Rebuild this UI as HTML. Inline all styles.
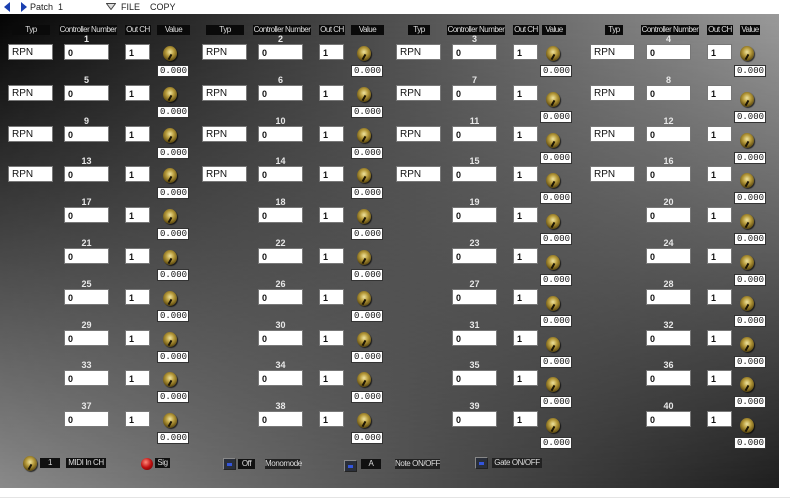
<!DOCTYPE html>
<html><head><meta charset="utf-8"><style>
*{margin:0;padding:0;box-sizing:border-box}
body{width:790px;height:500px;background:#fff;position:relative;overflow:hidden;font-family:"Liberation Sans",sans-serif}
#top{position:absolute;left:0;top:0;width:790px;height:14px;background:#fff;font-size:9px;color:#222}
#top span{position:absolute;top:2px}
#panel{position:absolute;left:0;top:14px;width:779px;height:474px;background:linear-gradient(to right,#050505,#9a9a9a)}
#ov{position:absolute;left:0;top:0;width:779px;height:474px;background:linear-gradient(to right,#8a8a8a,#1e1e1e);-webkit-mask-image:linear-gradient(to bottom,transparent,#000);mask-image:linear-gradient(to bottom,transparent,#000)}
.h{position:absolute;background:#0a0a0a;color:#ddd;font-size:8px;height:10px;line-height:10px;text-align:center;letter-spacing:-0.5px;top:11px;white-space:nowrap;overflow:hidden}
.r{position:absolute;width:194px;height:34px}
.r .n{position:absolute;left:64px;width:45px;top:-9px;text-align:center;color:#e8e8e8;font-size:9px;font-weight:bold;line-height:9px}
.r i{position:absolute;font-style:normal;background:#fff;color:#111;font-size:9px;font-weight:bold;height:16px;line-height:16px;padding-left:3px;top:0;border:1px solid #777}
.r .t{left:8px;width:45px;font-size:10px;font-weight:normal}
.r .c{left:64px;width:45px}
.r .o{left:125px;width:25px}
.r .v{left:157px;width:32px;height:12px;line-height:10px;top:calc(21px + var(--d,0px));font-family:"Liberation Mono",monospace;font-weight:normal;font-size:9px;padding-left:2px;border:1px solid #333}
.r.s .v{left:152px}
.k,.r u{position:absolute;width:14px;height:15px;border-radius:50%;background:radial-gradient(circle at 50% 40%,#efe4a0 0%,#b89c3c 35%,#6a5515 70%,#1a1405 100%);box-shadow:1px 1px 1px rgba(0,0,0,.7)}
.r u{left:163px;top:calc(2px + var(--d,0px))}
.r.s u{left:158px}
.r u:after,.k:after{content:"";position:absolute;left:6px;top:8px;width:2px;height:6px;background:#1a1405;transform:rotate(30deg)}
.lb{position:absolute;background:#111;color:#ddd;font-size:8px;height:10px;line-height:10px;text-align:center;letter-spacing:-0.4px;white-space:nowrap}
.bt{position:absolute;width:13px;height:12px;background:#2a2f3a;border:1px solid #888;border-right-color:#222;border-bottom-color:#222}
.bt:after{content:"";position:absolute;left:3px;top:4px;width:5px;height:3px;background:#3355dd}
</style></head><body>
<div id="top">
<svg style="position:absolute;left:3px;top:2px" width="26" height="10"><path d="M7 0 L1 5 L7 10Z" fill="#1a3fb0"/><path d="M18 0 L24 5 L18 10Z" fill="#1a3fb0"/></svg>
<span style="left:30px">Patch&nbsp; 1</span>
<svg style="position:absolute;left:106px;top:3px" width="10" height="7"><path d="M0.5 0.5 L9.5 0.5 L5 6.5Z" fill="#ddd" stroke="#444"/></svg>
<span style="left:121px">FILE</span>
<span style="left:150px">COPY</span>
</div>
<div id="panel"><div id="ov"></div>
<div class="h" style="left:12px;width:38px">Typ</div><div class="h" style="left:59px;width:58px">Controller Number</div><div class="h" style="left:125px;width:26px">Out CH</div><div class="h" style="left:157px;width:33px">Value</div>
<div class="h" style="left:206px;width:38px">Typ</div><div class="h" style="left:253px;width:58px">Controller Number</div><div class="h" style="left:319px;width:26px">Out CH</div><div class="h" style="left:351px;width:33px">Value</div>
<div class="h" style="left:408px;width:22px">Typ</div><div class="h" style="left:447px;width:58px">Controller Number</div><div class="h" style="left:513px;width:26px">Out CH</div><div class="h" style="left:542px;width:24px">Value</div>
<div class="h" style="left:605px;width:18px">Typ</div><div class="h" style="left:641px;width:58px">Controller Number</div><div class="h" style="left:707px;width:26px">Out CH</div><div class="h" style="left:740px;width:20px">Value</div>

<div class="r" style="left:0;top:30px"><b class="n">1</b><i class="t">RPN</i><i class="c">0</i><i class="o">1</i><u></u><i class="v">0.000</i></div>
<div class="r" style="left:0;top:71px"><b class="n">5</b><i class="t">RPN</i><i class="c">0</i><i class="o">1</i><u></u><i class="v">0.000</i></div>
<div class="r" style="left:0;top:112px"><b class="n">9</b><i class="t">RPN</i><i class="c">0</i><i class="o">1</i><u></u><i class="v">0.000</i></div>
<div class="r" style="left:0;top:152px"><b class="n">13</b><i class="t">RPN</i><i class="c">0</i><i class="o">1</i><u></u><i class="v">0.000</i></div>
<div class="r" style="left:0;top:193px"><b class="n">17</b><i class="c">0</i><i class="o">1</i><u></u><i class="v">0.000</i></div>
<div class="r" style="left:0;top:234px"><b class="n">21</b><i class="c">0</i><i class="o">1</i><u></u><i class="v">0.000</i></div>
<div class="r" style="left:0;top:275px"><b class="n">25</b><i class="c">0</i><i class="o">1</i><u></u><i class="v">0.000</i></div>
<div class="r" style="left:0;top:316px"><b class="n">29</b><i class="c">0</i><i class="o">1</i><u></u><i class="v">0.000</i></div>
<div class="r" style="left:0;top:356px"><b class="n">33</b><i class="c">0</i><i class="o">1</i><u></u><i class="v">0.000</i></div>
<div class="r" style="left:0;top:397px"><b class="n">37</b><i class="c">0</i><i class="o">1</i><u></u><i class="v">0.000</i></div>

<div class="r" style="left:194px;top:30px"><b class="n">2</b><i class="t">RPN</i><i class="c">0</i><i class="o">1</i><u></u><i class="v">0.000</i></div>
<div class="r" style="left:194px;top:71px"><b class="n">6</b><i class="t">RPN</i><i class="c">0</i><i class="o">1</i><u></u><i class="v">0.000</i></div>
<div class="r" style="left:194px;top:112px"><b class="n">10</b><i class="t">RPN</i><i class="c">0</i><i class="o">1</i><u></u><i class="v">0.000</i></div>
<div class="r" style="left:194px;top:152px"><b class="n">14</b><i class="t">RPN</i><i class="c">0</i><i class="o">1</i><u></u><i class="v">0.000</i></div>
<div class="r" style="left:194px;top:193px"><b class="n">18</b><i class="c">0</i><i class="o">1</i><u></u><i class="v">0.000</i></div>
<div class="r" style="left:194px;top:234px"><b class="n">22</b><i class="c">0</i><i class="o">1</i><u></u><i class="v">0.000</i></div>
<div class="r" style="left:194px;top:275px"><b class="n">26</b><i class="c">0</i><i class="o">1</i><u></u><i class="v">0.000</i></div>
<div class="r" style="left:194px;top:316px"><b class="n">30</b><i class="c">0</i><i class="o">1</i><u></u><i class="v">0.000</i></div>
<div class="r" style="left:194px;top:356px"><b class="n">34</b><i class="c">0</i><i class="o">1</i><u></u><i class="v">0.000</i></div>
<div class="r" style="left:194px;top:397px"><b class="n">38</b><i class="c">0</i><i class="o">1</i><u></u><i class="v">0.000</i></div>

<div class="r s" style="left:388px;top:30px;--d:0px"><b class="n">3</b><i class="t">RPN</i><i class="c">0</i><i class="o">1</i><u></u><i class="v">0.000</i></div>
<div class="r s" style="left:388px;top:71px;--d:5px"><b class="n">7</b><i class="t">RPN</i><i class="c">0</i><i class="o">1</i><u></u><i class="v">0.000</i></div>
<div class="r s" style="left:388px;top:112px;--d:5px"><b class="n">11</b><i class="t">RPN</i><i class="c">0</i><i class="o">1</i><u></u><i class="v">0.000</i></div>
<div class="r s" style="left:388px;top:152px;--d:5px"><b class="n">15</b><i class="t">RPN</i><i class="c">0</i><i class="o">1</i><u></u><i class="v">0.000</i></div>
<div class="r s" style="left:388px;top:193px;--d:5px"><b class="n">19</b><i class="c">0</i><i class="o">1</i><u></u><i class="v">0.000</i></div>
<div class="r s" style="left:388px;top:234px;--d:5px"><b class="n">23</b><i class="c">0</i><i class="o">1</i><u></u><i class="v">0.000</i></div>
<div class="r s" style="left:388px;top:275px;--d:5px"><b class="n">27</b><i class="c">0</i><i class="o">1</i><u></u><i class="v">0.000</i></div>
<div class="r s" style="left:388px;top:316px;--d:5px"><b class="n">31</b><i class="c">0</i><i class="o">1</i><u></u><i class="v">0.000</i></div>
<div class="r s" style="left:388px;top:356px;--d:5px"><b class="n">35</b><i class="c">0</i><i class="o">1</i><u></u><i class="v">0.000</i></div>
<div class="r s" style="left:388px;top:397px;--d:5px"><b class="n">39</b><i class="c">0</i><i class="o">1</i><u></u><i class="v">0.000</i></div>

<div class="r s" style="left:582px;top:30px;--d:0px"><b class="n">4</b><i class="t">RPN</i><i class="c">0</i><i class="o">1</i><u></u><i class="v">0.000</i></div>
<div class="r s" style="left:582px;top:71px;--d:5px"><b class="n">8</b><i class="t">RPN</i><i class="c">0</i><i class="o">1</i><u></u><i class="v">0.000</i></div>
<div class="r s" style="left:582px;top:112px;--d:5px"><b class="n">12</b><i class="t">RPN</i><i class="c">0</i><i class="o">1</i><u></u><i class="v">0.000</i></div>
<div class="r s" style="left:582px;top:152px;--d:5px"><b class="n">16</b><i class="t">RPN</i><i class="c">0</i><i class="o">1</i><u></u><i class="v">0.000</i></div>
<div class="r s" style="left:582px;top:193px;--d:5px"><b class="n">20</b><i class="c">0</i><i class="o">1</i><u></u><i class="v">0.000</i></div>
<div class="r s" style="left:582px;top:234px;--d:5px"><b class="n">24</b><i class="c">0</i><i class="o">1</i><u></u><i class="v">0.000</i></div>
<div class="r s" style="left:582px;top:275px;--d:5px"><b class="n">28</b><i class="c">0</i><i class="o">1</i><u></u><i class="v">0.000</i></div>
<div class="r s" style="left:582px;top:316px;--d:5px"><b class="n">32</b><i class="c">0</i><i class="o">1</i><u></u><i class="v">0.000</i></div>
<div class="r s" style="left:582px;top:356px;--d:5px"><b class="n">36</b><i class="c">0</i><i class="o">1</i><u></u><i class="v">0.000</i></div>
<div class="r s" style="left:582px;top:397px;--d:5px"><b class="n">40</b><i class="c">0</i><i class="o">1</i><u></u><i class="v">0.000</i></div>

<div class="k" style="left:23px;top:442px"></div>
<div class="lb" style="left:40px;top:444px;width:20px">1</div>
<div class="lb" style="left:66px;top:444px;width:40px">MIDI In CH</div>
<div style="position:absolute;left:141px;top:444px;width:12px;height:12px;border-radius:50%;background:radial-gradient(circle at 40% 35%,#ff8a7a,#c01010 50%,#500 100%)"></div>
<div class="lb" style="left:155px;top:444px;width:15px">Sig</div>
<div class="bt" style="left:223px;top:444px"></div>
<div class="lb" style="left:238px;top:445px;width:17px">Off</div>
<div class="lb" style="left:265px;top:445px;width:35px;background:#222">Monomode</div>
<div class="bt" style="left:344px;top:446px"></div>
<div class="lb" style="left:361px;top:445px;width:20px">A</div>
<div class="lb" style="left:395px;top:445px;width:45px;background:#222">Note ON/OFF</div>
<div class="bt" style="left:475px;top:443px"></div>
<div class="lb" style="left:492px;top:444px;width:50px;background:#222">Gate ON/OFF</div>
</div>
<div style="position:absolute;left:0;top:497px;width:790px;height:1px;background:#e4e4e4"></div>
</body></html>
